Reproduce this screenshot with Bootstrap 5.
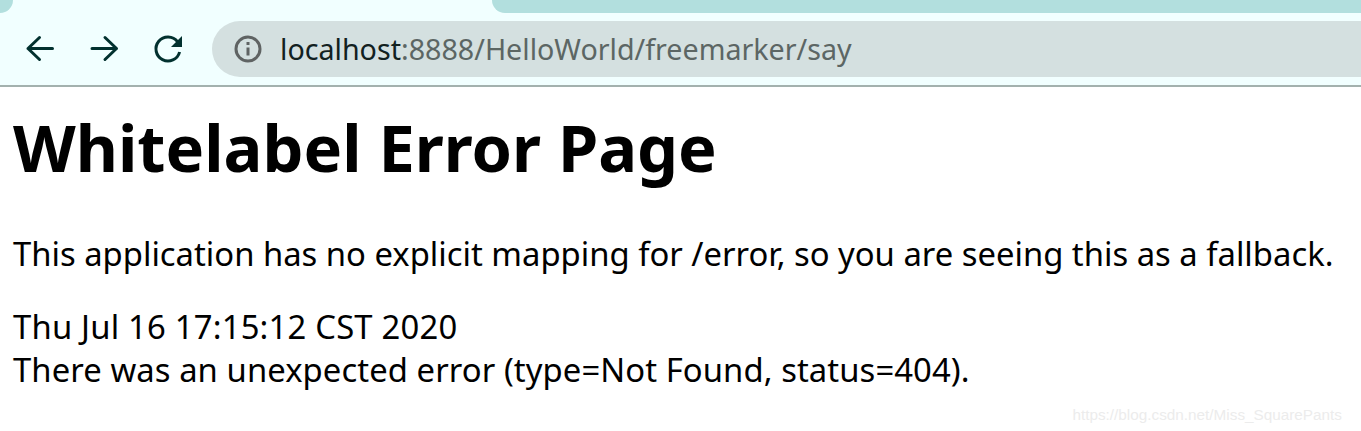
<!DOCTYPE html>
<html lang="en">
<head>
    <meta charset="UTF-8">
    <title>Whitelabel Error Page</title>
    <link href="https://cdn.jsdelivr.net/npm/bootstrap@5.3.0/dist/css/bootstrap.min.css" rel="stylesheet">
    <style>
        body {
            background: #fff;
            color: #000;
            font-family: "Noto Sans", "Open Sans", sans-serif;
            height: 431px;
            overflow: hidden;
            position: relative;
        }

        .browser-bar {
            background: #f1ffff;
            height: 87px;
            border-bottom: 2px solid #a3b1ae;
        }

        .tab-strip {
            height: 13px;
        }

        .tab-left {
            width: 13px;
            background: #b2dfde;
            border-bottom-right-radius: 13px;
        }

        .tab-right {
            margin-left: 479px;
            background: #b2dfde;
            border-bottom-left-radius: 13px;
        }

        .nav-row {
            height: 72px;
            padding-top: 8px;
            padding-left: 23px;
        }

        .nav-icon {
            width: 34px;
            height: 34px;
            margin-top: 10px;
            margin-right: 30px;
            color: #02312f;
        }

        .nav-icon:last-of-type {
            margin-right: 0;
        }

        .url-box {
            background: #d4e0e0;
            height: 56px;
            margin-left: 27px;
            border-radius: 28px 0 0 28px;
            padding-left: 21px;
            font-size: 28.65px;
            color: #5c6664;
        }

        .url-box svg {
            width: 30px;
            height: 30px;
            margin-right: 17px;
        }

        .url-host {
            color: #12211f;
        }

        .error-body {
            padding: 0 13px;
        }

        .error-body h1 {
            font-size: 64.9px;
            font-weight: 700;
            line-height: 1;
            margin: 28px 0 52px;
        }

        .error-body p,
        .error-body div {
            font-size: 32.8px;
            line-height: 43px;
        }

        .error-body p {
            margin-bottom: 30px;
        }

        .error-body .date-line {
            letter-spacing: .2px;
        }

        .error-body .status-line {
            letter-spacing: .08px;
        }

        .watermark {
            position: absolute;
            right: 19px;
            top: 404px;
            font-family: "Liberation Sans", sans-serif;
            font-size: 15.3px;
            color: #ececec;
        }
    </style>
</head>
<body>
    <div class="browser-bar">
        <div class="tab-strip d-flex">
            <div class="tab-left"></div>
            <div class="tab-right flex-fill"></div>
        </div>
        <div class="nav-row d-flex align-items-start">
            <svg class="nav-icon" viewBox="0 0 34 34" fill="none" stroke="currentColor" stroke-width="3" stroke-linecap="round" stroke-linejoin="round"><path d="M29.5 17.5H5M16.5 6.5 5 17.5l11.5 11"/></svg>
            <svg class="nav-icon" viewBox="0 0 34 34" fill="none" stroke="currentColor" stroke-width="3" stroke-linecap="round" stroke-linejoin="round"><path d="M5 17.5h24.5M18 6.5l11.5 11-11.5 11"/></svg>
            <svg class="nav-icon" viewBox="0 0 34 34"><path d="M26.5 10.7A12 12 0 1 0 28.6 21" fill="none" stroke="currentColor" stroke-width="3"/><path d="M31 5v11H20z" fill="currentColor"/></svg>
            <div class="url-box flex-fill d-flex align-items-center">
                <svg viewBox="0 0 30 30" fill="none"><circle cx="15" cy="15" r="12" stroke="#5f6363" stroke-width="3"/><path d="M15 13.5v8M15 8v3" stroke="#5f6363" stroke-width="3"/></svg>
                <span><span class="url-host">localhost</span>:8888/HelloWorld/freemarker/say</span>
            </div>
        </div>
    </div>
    <div class="error-body">
        <h1>Whitelabel Error Page</h1>
        <p>This application has no explicit mapping for /error, so you are seeing this as a fallback.</p>
        <div class="date-line">Thu Jul 16 17:15:12 CST 2020</div>
        <div class="status-line">There was an unexpected error (type=Not Found, status=404).</div>
    </div>
    <div class="watermark">https://blog.csdn.net/Miss_SquarePants</div>
    <script src="https://cdn.jsdelivr.net/npm/bootstrap@5.3.0/dist/js/bootstrap.bundle.min.js"></script>
</body>
</html>
